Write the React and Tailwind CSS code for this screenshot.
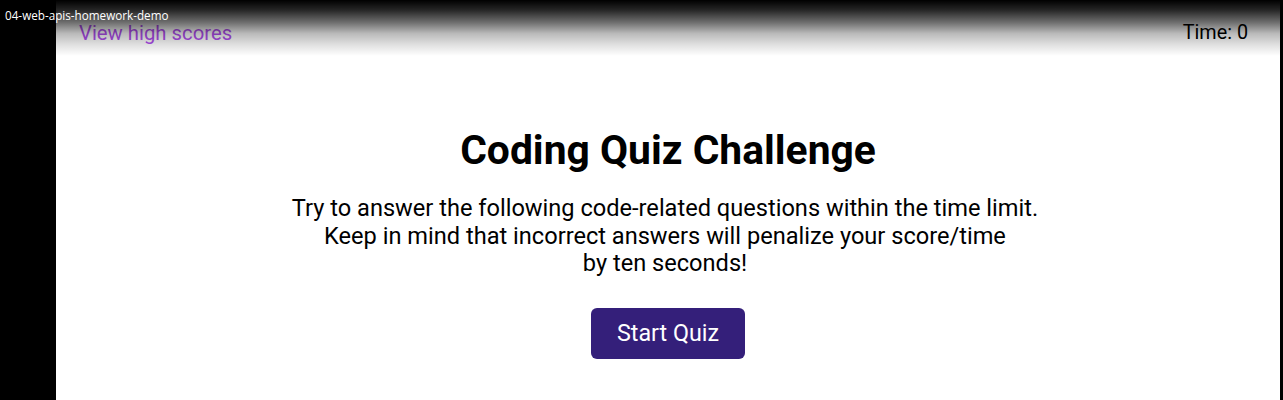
export default function App() {
  return (
    <div className="relative flex h-[400px] w-full overflow-hidden bg-black font-['Roboto',sans-serif]">
      <div className="w-[56px] shrink-0 bg-black" />

      <main className="flex flex-1 flex-col bg-white">
        <header className="flex items-center justify-between pl-[23px] pr-[32px] pt-[23px]">
          <a className="text-[20.3px] leading-[20px] text-[#b04fef]">View high scores</a>
          <span className="text-[19.8px] leading-[20px] text-black">Time: 0</span>
        </header>

        <section className="flex flex-col items-center pt-[83px] text-center">
          <h1 className="text-[40.8px] font-bold leading-[48px] text-black">Coding Quiz Challenge</h1>
          <p className="mt-[21px] pr-[6px] text-[23.6px] leading-[27.5px] text-black">
            Try to answer the following code-related questions within the time limit.
            <br />
            Keep in mind that incorrect answers will penalize your score/time
            <br />
            by ten seconds!
          </p>
          <button className="mt-[30px] h-[51px] w-[154px] rounded-[6px] bg-[#341f7a] text-[23.3px] text-white">
            Start Quiz
          </button>
        </section>
      </main>

      <div className="w-[3px] shrink-0 bg-black" />

      {/* video player title bar fades over the page */}
      <div className="pointer-events-none absolute inset-x-0 top-0 h-[56px] bg-[linear-gradient(to_bottom,rgba(0,0,0,1)_0%,rgba(0,0,0,0.85)_18%,rgba(0,0,0,0.57)_40%,rgba(0,0,0,0.27)_60%,rgba(0,0,0,0.12)_80%,rgba(0,0,0,0)_100%)]">
        <span className="absolute left-[5px] top-[8px] font-['Open_Sans',sans-serif] text-[11.7px] leading-[14px] text-white">
          04-web-apis-homework-demo
        </span>
      </div>
    </div>
  );
}
